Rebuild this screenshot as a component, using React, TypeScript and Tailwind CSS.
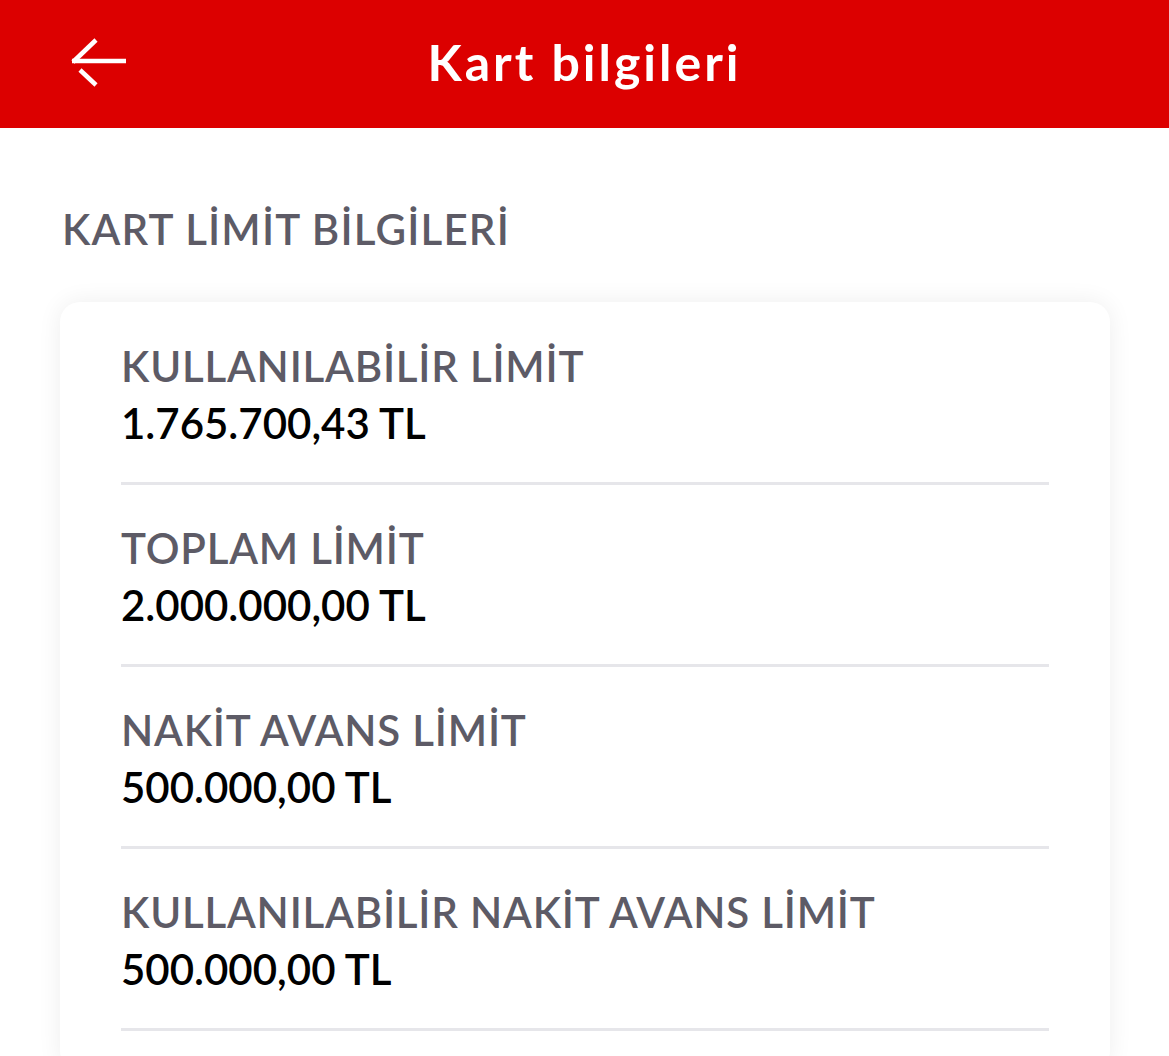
import React from 'react';

const rows = [
    { label: 'KULLANILABİLİR LİMİT', value: '1.765.700,43 TL' },
    { label: 'TOPLAM LİMİT', value: '2.000.000,00 TL' },
    { label: 'NAKİT AVANS LİMİT', value: '500.000,00 TL' },
    { label: 'KULLANILABİLİR NAKİT AVANS LİMİT', value: '500.000,00 TL' },
];

function BackArrow() {
    return (
        <svg width="60" height="60" viewBox="0 0 60 60" fill="none" stroke="white" strokeWidth="4.5" strokeLinecap="butt">
            <line x1="2" y1="31" x2="56" y2="31" />
            <line x1="3" y1="32" x2="26" y2="10" />
            <line x1="10" y1="40" x2="26" y2="55" />
        </svg>
    );
}

export default function App() {
    return (
        <div className="min-h-screen bg-white" style={{ fontFamily: 'Lato, "Noto Sans", sans-serif' }}>
            {/* Header */}
            <header className="relative h-[128px] bg-[#dc0000] flex items-center justify-center">
                <button className="absolute left-[70px] top-[30px]">
                    <BackArrow />
                </button>
                <h1 className="text-white text-[50px] font-bold tracking-[3px] leading-none -mt-[4px]">Kart bilgileri</h1>
            </header>

            <main className="px-[60px] pt-[78px]">
                <h2 className="text-[42px] leading-[46px] font-semibold text-[#5d5b66] tracking-[1.2px] pl-[2px]">KART LİMİT BİLGİLERİ</h2>

                <div className="mt-[50px] w-[1050px] rounded-[20px] bg-white shadow-[0_0_24px_rgba(0,0,0,0.07)] px-[61px] pb-[40px]">
                    {rows.map((r, i) => (
                        <div key={i} className={`${i === 0 ? 'pt-[41px]' : 'pt-[40px]'} border-b-[3px] border-[#e6e6ea]`}>
                            <div className="text-[42px] leading-[46px] font-semibold text-[#5d5b66] tracking-[0.8px]">{r.label}</div>
                            <div className="mt-[11px] pb-[36px] text-[42px] leading-[46px] font-semibold text-black">{r.value}</div>
                        </div>
                    ))}
                </div>
            </main>
        </div>
    );
}
